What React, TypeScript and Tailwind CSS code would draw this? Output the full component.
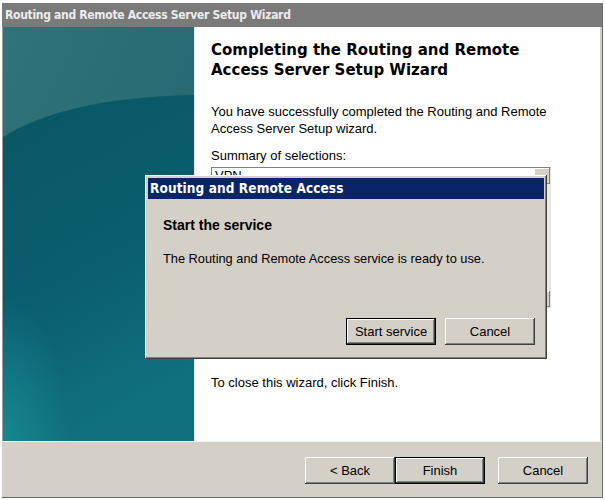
import React from 'react';

const btn =
  'h-[27px] w-[90px] bg-[#d4d0c8] text-[13px] text-black flex items-center justify-center shadow-[inset_-1px_-1px_0_#404040,inset_1px_1px_0_#ffffff,inset_-2px_-2px_0_#808080]';
const btnDefault =
  'h-[27px] w-[90px] bg-[#d4d0c8] text-[13px] text-black flex items-center justify-center border border-black shadow-[inset_-1px_-1px_0_#404040,inset_1px_1px_0_#ffffff,inset_-2px_-2px_0_#808080]';

// left wizard artwork
const TealArt = () => (
  <svg width="191" height="414" viewBox="0 0 191 414" className="block">
    <defs>
      <linearGradient id="top" x1="0" y1="0" x2="1" y2="1">
        <stop offset="0" stopColor="#30737a" />
        <stop offset="1" stopColor="#1f646e" />
      </linearGradient>
      <linearGradient id="low" x1="0" y1="0" x2="0.3" y2="1">
        <stop offset="0" stopColor="#0a5664" />
        <stop offset="0.6" stopColor="#0b5e6e" />
        <stop offset="1" stopColor="#10707f" />
      </linearGradient>
      <radialGradient id="glow" cx="0" cy="1" r="0.35">
        <stop offset="0" stopColor="#1a9298" stopOpacity="0.7" />
        <stop offset="1" stopColor="#1a9298" stopOpacity="0" />
      </radialGradient>
    </defs>
    <rect width="191" height="414" fill="url(#top)" />
    <path d="M0 110 C 40 85, 100 70, 191 68 L 191 414 L 0 414 Z" fill="url(#low)" />
    <rect width="191" height="414" fill="url(#glow)" />
  </svg>
);

export default function App() {
  return (
    <div className="relative w-[605px] h-[500px] bg-white pt-[3px] px-[2px] font-['Liberation_Sans',Arial,sans-serif]">
      <div className="flex flex-col w-[601px] h-[495px] border-r border-b border-[#6a6a6a]">
        <div className="h-[24px] bg-[#7a7a7a] flex items-center pl-[3px] text-[#ececec] text-[12px] font-bold font-['DejaVu_Sans_Condensed','DejaVu_Sans',sans-serif] tracking-[-0.3px]">
          Routing and Remote Access Server Setup Wizard
        </div>
        <div className="flex h-[414px] border-l border-[#9a9a9a]">
          <TealArt />
          <div className="flex-1 bg-white border-l border-[#e6e6e6] border-r-2 border-r-[#d4d0c8] pl-[16px] pt-[13px]">
            <h1 className="font-['DejaVu_Sans',Verdana,sans-serif] font-bold text-[15px] leading-[20px] text-black">
              Completing the Routing and Remote
              <br />
              Access Server Setup Wizard
            </h1>
            <p className="mt-[23px] text-[13px] leading-[17px] text-black">
              You have successfully completed the Routing and Remote
              <br />
              Access Server Setup wizard.
            </p>
            <p className="mt-[10px] text-[13px] leading-[17px] text-black">Summary of selections:</p>
            <div className="mt-[3px] w-[340px] h-[141px] flex border border-t-[#808080] border-l-[#808080] border-r-[#e0e0e0] border-b-[#e0e0e0] bg-white">
              <div className="flex-1 pl-[3px] text-[13px] leading-[16px] text-black">VPN</div>
              <div className="w-[16px] bg-[#eeebe5] flex flex-col">
                <div className="h-[16px] bg-[#d4d0c8] shadow-[inset_-1px_-1px_0_#808080,inset_1px_1px_0_#ffffff]" />
                <div className="flex-1" />
                <div className="h-[16px] bg-[#d4d0c8] shadow-[inset_-1px_-1px_0_#808080,inset_1px_1px_0_#ffffff]" />
              </div>
            </div>
            <p className="mt-[66px] text-[13px] leading-[17px] text-black">To close this wizard, click Finish.</p>
          </div>
        </div>
        <div className="flex-1 bg-[#d4d0c8] border-t border-[#f4f4f4] flex items-start pt-[15px] pl-[303px]">
          <div className={btn}>&lt; Back</div>
          <div className={btnDefault}>Finish</div>
          <div className={`${btn} ml-[13px]`}>Cancel</div>
        </div>
      </div>

      <div className="absolute left-[145px] top-[175px] w-[402px] h-[184px] bg-[#d4d0c8] p-[3px] shadow-[inset_-1px_-1px_0_#404040,inset_1px_1px_0_#ffffff,inset_-2px_-2px_0_#808080]">
        <div className="h-[21px] bg-[#0a246a] text-white text-[13.5px] font-bold flex items-center pl-[2px] font-['DejaVu_Sans_Condensed','DejaVu_Sans',sans-serif] tracking-[0.1px]">
          Routing and Remote Access
        </div>
        <div className="pl-[15px] pt-[17px]">
          <div className="text-[14px] font-bold text-black leading-[18px]">Start the service</div>
          <div className="mt-[16px] text-[12.8px] leading-[17px] text-black">
            The Routing and Remote Access service is ready to use.
          </div>
        </div>
        <div className="absolute left-[201px] top-[143px] flex gap-[9px]">
          <div className={btnDefault}>Start service</div>
          <div className={btn}>Cancel</div>
        </div>
      </div>
    </div>
  );
}
